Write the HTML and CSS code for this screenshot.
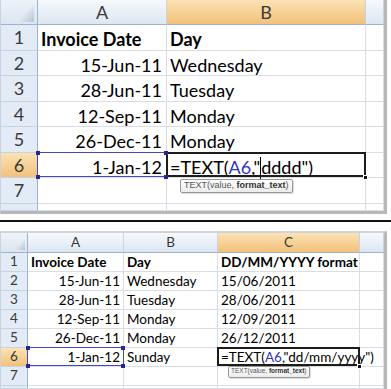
FILE: index.html
```html
<!DOCTYPE html>
<html>
<head>
<meta charset="utf-8">
<link rel="stylesheet" href="styles.css">
</head>
<body>
<div class="page">
  <div class="sheet sheet-top">
    <div class="hd corner"><span class="tri"></span></div>
    <div class="hd">A</div>
    <div class="hd on">B</div>
    <div class="hd"></div>

    <div class="hd rh">1</div>
    <div class="c b">Invoice Date</div>
    <div class="c b">Day</div>
    <div class="c"></div>

    <div class="hd rh">2</div>
    <div class="c r">15-Jun-11</div>
    <div class="c">Wednesday</div>
    <div class="c"></div>

    <div class="hd rh">3</div>
    <div class="c r">28-Jun-11</div>
    <div class="c">Tuesday</div>
    <div class="c"></div>

    <div class="hd rh">4</div>
    <div class="c r">12-Sep-11</div>
    <div class="c">Monday</div>
    <div class="c"></div>

    <div class="hd rh">5</div>
    <div class="c r">26-Dec-11</div>
    <div class="c">Monday</div>
    <div class="c"></div>

    <div class="hd rh on">6</div>
    <div class="c r sel">1-Jan-12<i class="h tl"></i><i class="h tr"></i><i class="h bl"></i><i class="h br"></i></div>
    <div class="c edit">=TEXT(<span class="ref">A6</span>,"<span class="caret"></span>dddd")<i class="grip"></i><span class="tip">TEXT(value, <b>format_text</b>)</span></div>
    <div class="c"></div>

    <div class="hd rh">7</div>
    <div class="c"></div>
    <div class="c"></div>
    <div class="c"></div>

    <div class="hd rh"></div>
    <div class="c"></div>
    <div class="c"></div>
    <div class="c"></div>
  </div>

  <div class="divider"></div>

  <div class="sheet sheet-bottom">
    <div class="hd corner"><span class="tri"></span></div>
    <div class="hd">A</div>
    <div class="hd">B</div>
    <div class="hd on">C</div>
    <div class="hd"></div>

    <div class="hd rh">1</div>
    <div class="c b">Invoice Date</div>
    <div class="c b">Day</div>
    <div class="c b">DD/MM/YYYY format</div>
    <div class="c"></div>

    <div class="hd rh">2</div>
    <div class="c r">15-Jun-11</div>
    <div class="c">Wednesday</div>
    <div class="c">15/06/2011</div>
    <div class="c"></div>

    <div class="hd rh">3</div>
    <div class="c r">28-Jun-11</div>
    <div class="c">Tuesday</div>
    <div class="c">28/06/2011</div>
    <div class="c"></div>

    <div class="hd rh">4</div>
    <div class="c r">12-Sep-11</div>
    <div class="c">Monday</div>
    <div class="c">12/09/2011</div>
    <div class="c"></div>

    <div class="hd rh">5</div>
    <div class="c r">26-Dec-11</div>
    <div class="c">Monday</div>
    <div class="c">26/12/2011</div>
    <div class="c"></div>

    <div class="hd rh on">6</div>
    <div class="c r sel">1-Jan-12<i class="h tl"></i><i class="h tr"></i><i class="h bl"></i><i class="h br"></i></div>
    <div class="c">Sunday</div>
    <div class="c edit">=TEXT(<span class="ref">A6</span>,"dd/mm/y<span class="caret"></span>yyy")<i class="grip"></i><span class="tip">TEXT(value, <b>format_text</b>)</span></div>
    <div class="c"></div>

    <div class="hd rh">7</div>
    <div class="c"></div>
    <div class="c"></div>
    <div class="c"></div>
    <div class="c"></div>

    <div class="hd rh"></div>
    <div class="c"></div>
    <div class="c"></div>
    <div class="c"></div>
    <div class="c"></div>
  </div>
</div>
</body>
</html>
```

FILE: styles.css
```css
* { box-sizing: border-box; }

body {
  margin: 0;
  width: 391px;
  height: 389px;
  overflow: hidden;
  background: #fff;
  color: #000;
  font-family: Lato, "Liberation Sans", sans-serif;
}

.page {
  display: flex;
  flex-direction: column;
}

.sheet {
  display: grid;
  width: 387px;
  background: #fff;
  border-right: 3px solid #b8b8b8;
  border-left: 1px solid #c9d2dd;
}

.sheet-top {
  grid-template-columns: 37px 129px 199px 18px;
  grid-template-rows: 25px repeat(7, 25.5px) 7px;
  border-bottom: 3px solid #b8b8b8;
  font-size: 18px;
}

.sheet-bottom {
  grid-template-columns: 27px 96px 94px 142px 24px;
  grid-template-rows: 20px repeat(7, 19px) 3px;
  border-top: 2px solid #cfd4da;
  font-size: 13.5px;
}

.divider {
  height: 2px;
  background: #111;
  margin: 6.5px 0 9px;
}

/* headers */
.hd {
  display: flex;
  align-items: center;
  justify-content: center;
  background: linear-gradient(#f6f9fc, #dde6f1);
  color: #3a3a3a;
  border-right: 1px solid #c6d3e3;
  border-bottom: 1px solid #9db3cc;
  line-height: 1;
}

.hd.rh {
  background: #e3ebf6;
  border-right: 1px solid #9db3cc;
  border-bottom: 1px solid #c6d3e3;
}

.hd.on {
  background: linear-gradient(#fbe2b4, #f2c17a);
}

.corner {
  justify-content: flex-end;
  align-items: flex-end;
  background: linear-gradient(#eef3f9, #dce5f0);
  border-right: 1px solid #9db3cc;
}

.sheet-top .corner { padding: 0 3px 2px 0; }
.sheet-bottom .corner { padding: 0 2px 2px 0; }

.tri {
  display: block;
  clip-path: polygon(100% 0, 100% 100%, 0 100%);
  background: linear-gradient(135deg, #f3f6fa 30%, #b3c4d8);
}

.sheet-top .tri { width: 17px; height: 18px; }
.sheet-bottom .tri { width: 11px; height: 11px; }

/* cells */
.c {
  display: flex;
  align-items: flex-end;
  padding: 0 3px 1.5px;
  white-space: nowrap;
  line-height: 1;
  border-right: 1px solid #d8dde6;
  border-bottom: 1px solid #d8dde6;
}

.sheet-top .c.r { padding-right: 4px; }

.r { justify-content: flex-end; }
.b { font-weight: 700; }

/* reference selection */
.sel { position: relative; }
.sel::after {
  content: "";
  position: absolute;
  inset: -1px -1px 0 -1px;
  border: 1.5px solid #4646c0;
  pointer-events: none;
}
.h {
  position: absolute;
  width: 4px;
  height: 4px;
  background: #26269a;
  z-index: 2;
}
.h.tl { left: -2px; top: -2px; }
.h.tr { right: -2px; top: -2px; }
.h.bl { left: -2px; bottom: -2px; }
.h.br { right: -2px; bottom: -2px; }

/* edit cell */
.edit {
  position: relative;
  z-index: 1;
}
.edit::after {
  content: "";
  position: absolute;
  inset: -1px -1px 0 -1px;
  border: 2px solid #1c1c1c;
  pointer-events: none;
}
.grip {
  position: absolute;
  right: -3px;
  bottom: -3px;
  width: 5px;
  height: 5px;
  background: #111;
  border: 1px solid #fff;
  z-index: 2;
}
.ref { color: #3535b8; }

.caret {
  display: inline-block;
  width: 1px;
  height: 1.25em;
  margin-bottom: -0.2em;
  background: #000;
}

.tip {
  position: absolute;
  display: block;
  font-family: "Liberation Sans", Arial, sans-serif;
  color: #555;
  background: linear-gradient(#fdfdfd, #ececec);
  border: 1px solid #999;
  border-radius: 2px;
  box-shadow: 1px 1px 1px rgba(0,0,0,0.15);
  line-height: 1;
  white-space: nowrap;
}
.tip b { color: #333; }

.sheet-top .tip {
  left: 13px;
  top: calc(100% + 1.5px);
  font-size: 9px;
  padding: 1px 3px 2px;
}

.sheet-bottom .tip {
  left: 10px;
  top: calc(100% + 0px);
  font-size: 6.5px;
  padding: 1px 2px 2px;
}
```
